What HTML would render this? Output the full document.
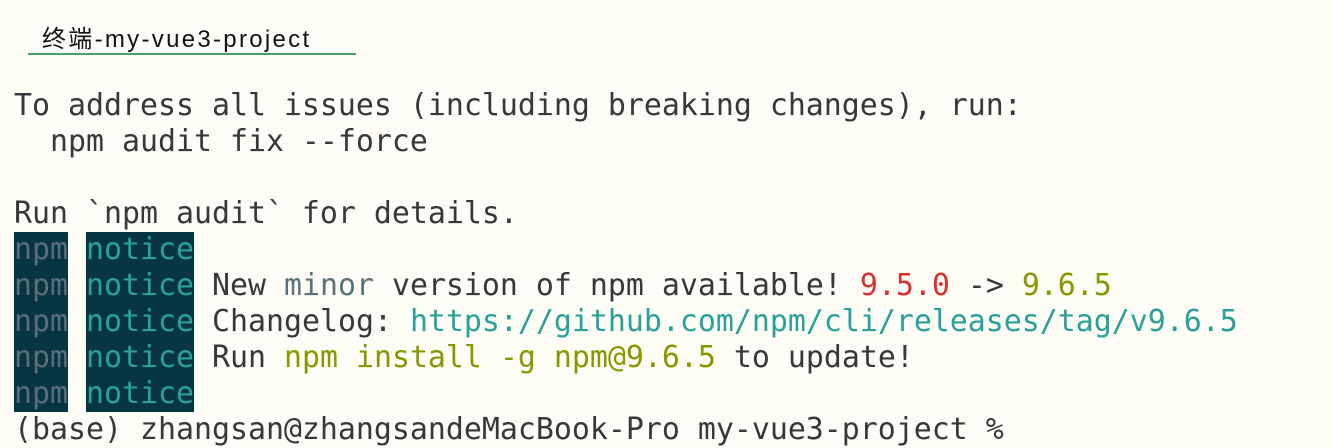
<!DOCTYPE html>
<html><head><meta charset="utf-8"><style>
html,body{margin:0;padding:0;}
body{width:1332px;height:422px;overflow:hidden;background:#fdfcf5;position:relative;}
.tab{position:absolute;left:42px;top:19px;font-family:"Liberation Sans","Noto Sans CJK SC",sans-serif;font-size:24px;letter-spacing:2.3px;color:#111;}
.ul{position:absolute;left:28px;top:53px;width:328px;height:2px;background:#4a9e6b;}
.term{position:absolute;left:14px;top:88px;font-family:"DejaVu Sans Mono","Liberation Mono",monospace;font-size:29.9px;line-height:36px;color:#383838;white-space:pre;}
.term div{height:36px;}
.b{background:#073642;display:inline-block;height:36px;vertical-align:top;}
.g{color:#586e75;}
.c{color:#2aa198;}
.r{color:#dc322f;}
.y{color:#859900;}
.l{color:#5a737b;}
</style></head><body>
<div class="tab">终端-my-vue3-project</div>
<div class="ul"></div>
<div class="term"><div>To address all issues (including breaking changes), run:</div><div>  npm audit fix --force</div><div> </div><div>Run `npm audit` for details.</div><div><span class="b g">npm</span> <span class="b c">notice</span></div><div><span class="b g">npm</span> <span class="b c">notice</span> New <span class="l">minor</span> version of npm available! <span class="r">9.5.0</span> -> <span class="y">9.6.5</span></div><div><span class="b g">npm</span> <span class="b c">notice</span> Changelog: <span class="c">https://github.com/npm/cli/releases/tag/v9.6.5</span></div><div><span class="b g">npm</span> <span class="b c">notice</span> Run <span class="y">npm install -g npm@9.6.5</span> to update!</div><div><span class="b g">npm</span> <span class="b c">notice</span></div><div>(base) zhangsan@zhangsandeMacBook-Pro my-vue3-project %</div></div>
</body></html>
